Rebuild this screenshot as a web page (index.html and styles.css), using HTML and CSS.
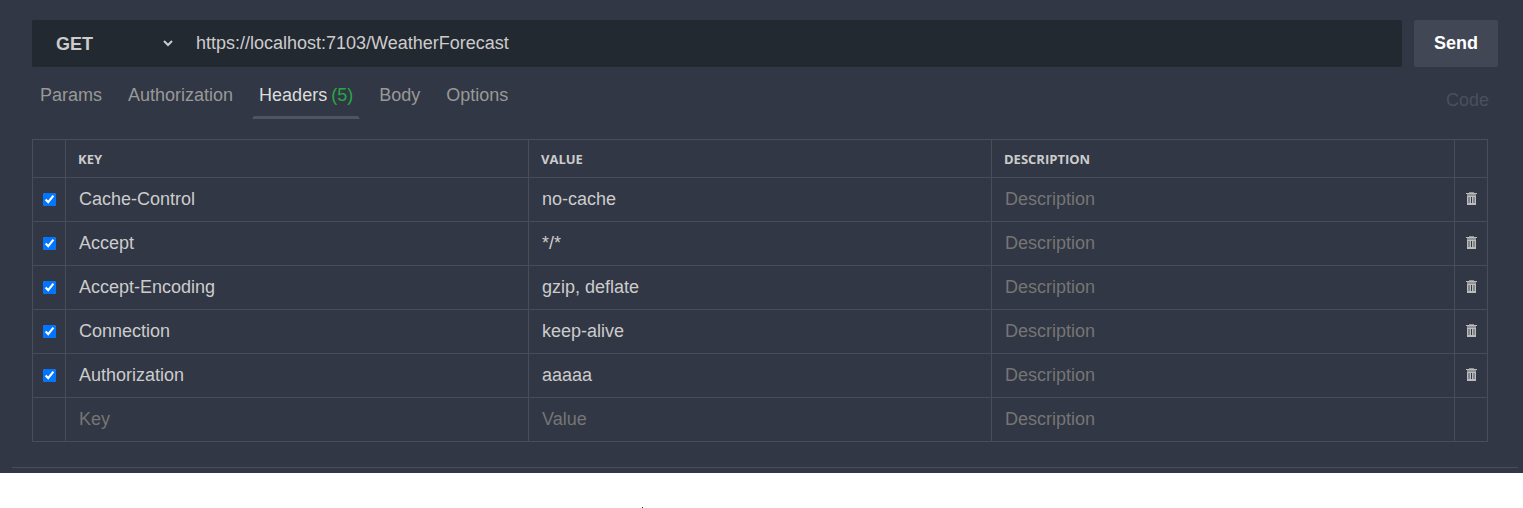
FILE: index.html
```
<!DOCTYPE html>
<html lang="en">
<head>
<meta charset="utf-8">
<title>Request</title>
<link rel="stylesheet" href="styles.css">
</head>
<body>
<svg class="sprite" aria-hidden="true">
  <symbol id="trash" viewBox="0 0 11 13">
    <path opacity=".7" d="M3 0h5v1H3zM1 2h9v2H1z"/>
    <path d="M0 1h11v1H0z"/>
    <path fill-rule="evenodd" d="M1 4h9v9H1zM2 5v7h7V5z"/>
    <path d="M2 11h7v1H2zM4 5h1v6H4zM6 5h1v6H6z"/>
    <path opacity=".6" d="M2 5h2v6H2zM7 5h2v6H7z"/>
  </symbol>
</svg>
<main class="panel">
  <form class="request">
    <div class="request-bar">
      <select class="method" aria-label="Method"><option>GET</option><option>POST</option><option>PUT</option><option>DELETE</option></select>
      <input class="url" type="text" aria-label="Request URL" value="https://localhost:7103/WeatherForecast">
    </div>
    <button class="send" type="button">Send</button>
  </form>
  <nav class="tabs">
    <button class="tab" type="button">Params</button>
    <button class="tab" type="button">Authorization</button>
    <button class="tab active" type="button">Headers<span class="count">(5)</span></button>
    <button class="tab" type="button">Body</button>
    <button class="tab" type="button">Options</button>
    <a class="code" href="#code">Code</a>
  </nav>
  <table class="headers">
    <colgroup><col class="narrow"><col><col><col><col class="narrow"></colgroup>
    <thead>
      <tr><th></th><th>KEY</th><th>VALUE</th><th>DESCRIPTION</th><th></th></tr>
    </thead>
    <tbody>
      <tr>
        <td><input class="check" type="checkbox" aria-label="Enable Cache-Control" checked></td>
        <td><input class="field" type="text" aria-label="Key" value="Cache-Control"></td>
        <td><input class="field" type="text" aria-label="Value" value="no-cache"></td>
        <td><input class="field" type="text" aria-label="Description" placeholder="Description"></td>
        <td><button class="delete" type="button" aria-label="Delete"><svg class="icon"><use href="#trash"/></svg></button></td>
      </tr>
      <tr>
        <td><input class="check" type="checkbox" aria-label="Enable Accept" checked></td>
        <td><input class="field" type="text" aria-label="Key" value="Accept"></td>
        <td><input class="field" type="text" aria-label="Value" value="*/*"></td>
        <td><input class="field" type="text" aria-label="Description" placeholder="Description"></td>
        <td><button class="delete" type="button" aria-label="Delete"><svg class="icon"><use href="#trash"/></svg></button></td>
      </tr>
      <tr>
        <td><input class="check" type="checkbox" aria-label="Enable Accept-Encoding" checked></td>
        <td><input class="field" type="text" aria-label="Key" value="Accept-Encoding"></td>
        <td><input class="field" type="text" aria-label="Value" value="gzip, deflate"></td>
        <td><input class="field" type="text" aria-label="Description" placeholder="Description"></td>
        <td><button class="delete" type="button" aria-label="Delete"><svg class="icon"><use href="#trash"/></svg></button></td>
      </tr>
      <tr>
        <td><input class="check" type="checkbox" aria-label="Enable Connection" checked></td>
        <td><input class="field" type="text" aria-label="Key" value="Connection"></td>
        <td><input class="field" type="text" aria-label="Value" value="keep-alive"></td>
        <td><input class="field" type="text" aria-label="Description" placeholder="Description"></td>
        <td><button class="delete" type="button" aria-label="Delete"><svg class="icon"><use href="#trash"/></svg></button></td>
      </tr>
      <tr>
        <td><input class="check" type="checkbox" aria-label="Enable Authorization" checked></td>
        <td><input class="field" type="text" aria-label="Key" value="Authorization"></td>
        <td><input class="field" type="text" aria-label="Value" value="aaaaa"></td>
        <td><input class="field" type="text" aria-label="Description" placeholder="Description"></td>
        <td><button class="delete" type="button" aria-label="Delete"><svg class="icon"><use href="#trash"/></svg></button></td>
      </tr>
      <tr>
        <td></td>
        <td><input class="field" type="text" aria-label="Key" placeholder="Key"></td>
        <td><input class="field" type="text" aria-label="Value" placeholder="Value"></td>
        <td><input class="field" type="text" aria-label="Description" placeholder="Description"></td>
        <td></td>
      </tr>
    </tbody>
  </table>
  <hr class="divider">
</main>
<div class="below"><span class="speck"></span></div>
</body>
</html>
```
FILE: styles.css
```
* {
  box-sizing: border-box;
}

body {
  margin: 0;
  background: #fff;
  color: #ccc;
  font: 18px/24px "Liberation Sans", Arial, sans-serif;
}

button,
input,
select {
  margin: 0;
  border: 0;
  background: none;
  color: inherit;
  font: inherit;
}

.sprite {
  display: none;
}

.panel {
  padding: 20px 5px 5px 12px;
  background: #313744;
}

.request {
  display: flex;
  gap: 12px;
  margin: 0 20px;
}

.request-bar {
  display: flex;
  flex: 1;
  height: 47px;
  border-radius: 2px;
  background: #232931;
}

.method {
  width: 124px;
  margin-left: 20px;
  border-radius: 0;
  background: #232931;
  font-weight: bold;
}

.url {
  flex: 1;
  min-width: 0;
  padding: 0 20px 2px;
}

.send {
  width: 84px;
  padding: 0 0 2px;
  border-radius: 2px;
  background: #414754;
  color: #fff;
  font-weight: bold;
}

.tabs {
  display: flex;
  gap: 12px;
  margin: 16px 29px 20px 21px;
}

.tab {
  display: flex;
  gap: 4px;
  padding: 0 5px 9px;
  border: 2px solid transparent;
  border-width: 0 2px 3px;
  color: #999;
}

.active {
  color: #ddd;
  border-bottom-color: #4e5464;
}

.count {
  color: #28a745;
}

.code {
  margin-left: auto;
  padding-top: 5px;
  color: #495060;
  text-decoration: none;
}

.headers {
  width: calc(100% - 50px);
  margin-left: 20px;
  border-collapse: collapse;
  table-layout: fixed;
}

.narrow {
  width: 33px;
}

.headers th,
.headers td {
  padding: 0;
  border: 1px solid #484d5a;
}

.headers th {
  height: 38px;
  padding: 0 12px;
  font: bold 13px/16px "Open Sans", "Noto Sans", sans-serif;
  text-align: left;
}

.headers td {
  height: 44px;
  text-align: center;
  vertical-align: middle;
}

.field {
  display: block;
  width: 100%;
  height: 43px;
  padding: 0 13px;
}

.field::placeholder {
  color: #757575;
}

.check {
  display: block;
  width: 13px;
  height: 13px;
  margin: 0 auto;
}

.delete {
  display: block;
  margin: 0 auto;
  padding: 0 0 2px;
}

.icon {
  display: block;
  width: 11px;
  height: 13px;
  fill: #bbb;
}

.divider {
  height: 1px;
  margin: 25px 0 0;
  border: 0;
  background: #484d5a;
}

.below {
  display: flex;
  justify-content: center;
  padding: 34px 238px 0 0;
}

.speck {
  width: 1px;
  height: 1px;
  background: #223;
}
```
